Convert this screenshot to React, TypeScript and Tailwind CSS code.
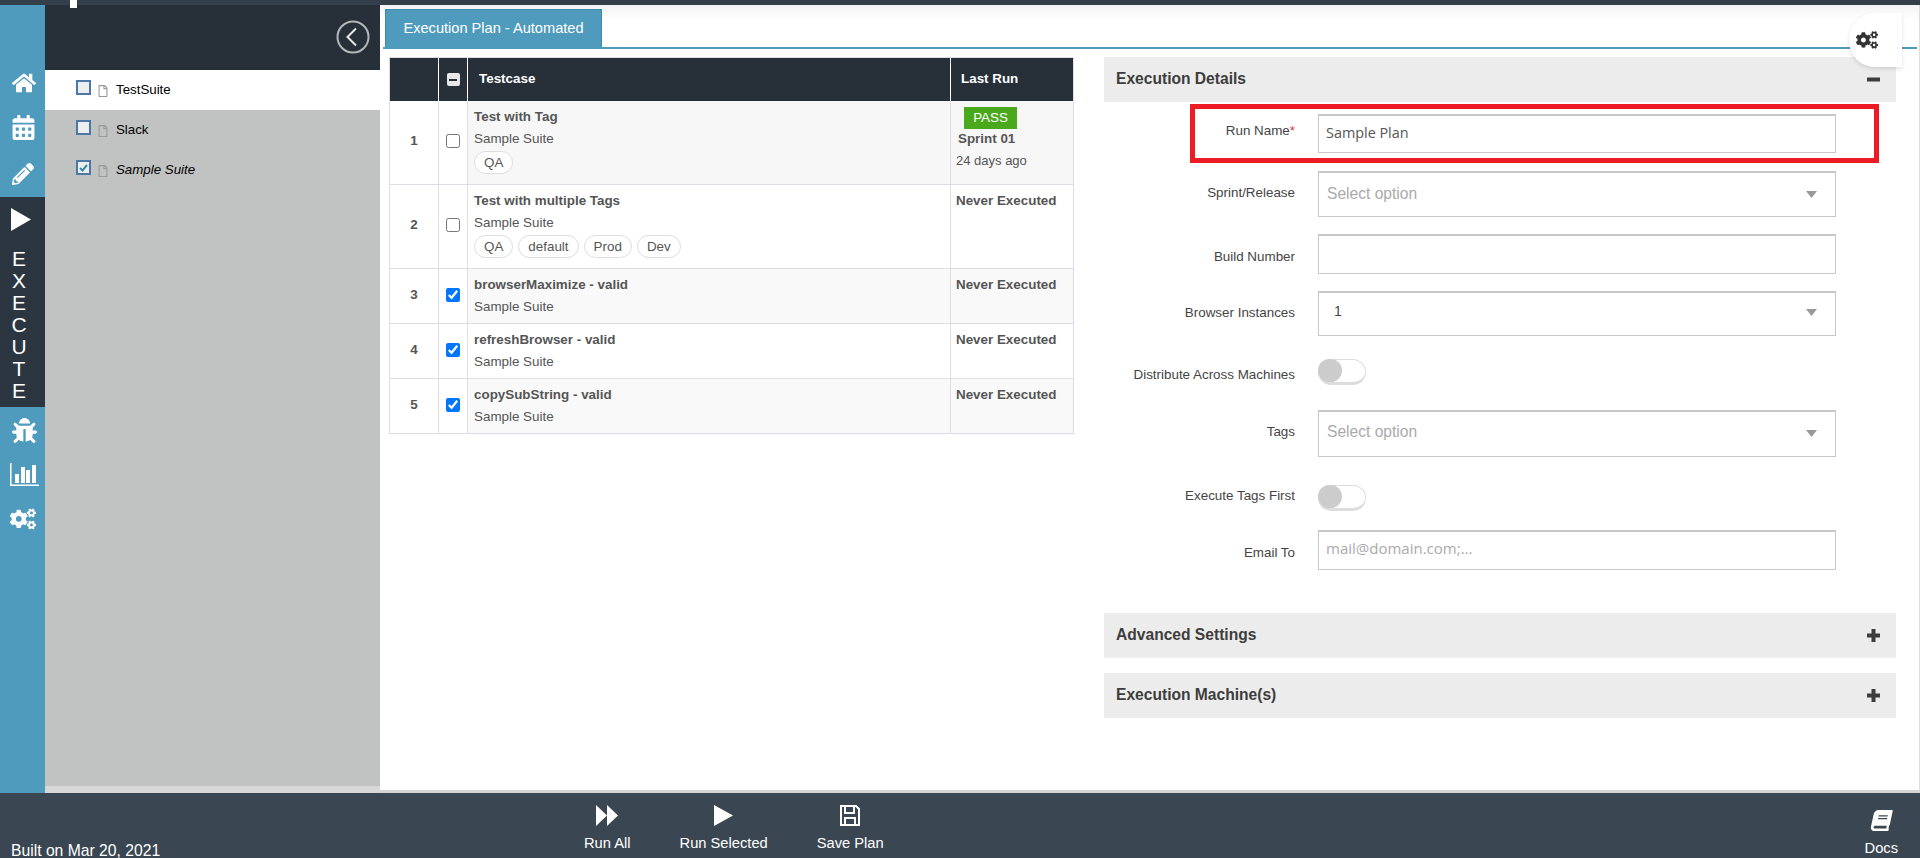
import { FaHome, FaCalendarAlt, FaPencilAlt, FaBug, FaCogs, FaBook, FaRegFile } from 'react-icons/fa';

const rows = [
  { n: 1, title: 'Test with Tag', tags: ['QA'], checked: false, bg: 'bg-[#f7f7f7]', h: 'h-[84px]', numTop: 'pt-[29px]', passed: true },
  { n: 2, title: 'Test with multiple Tags', tags: ['QA', 'default', 'Prod', 'Dev'], checked: false, bg: 'bg-white', h: 'h-[84px]', numTop: 'pt-[29px]', passed: false },
  { n: 3, title: 'browserMaximize - valid', tags: [], checked: true, bg: 'bg-[#f9f9f9]', h: 'h-[55px]', numTop: 'pt-[15px]', passed: false },
  { n: 4, title: 'refreshBrowser - valid', tags: [], checked: true, bg: 'bg-white', h: 'h-[55px]', numTop: 'pt-[15px]', passed: false },
  { n: 5, title: 'copySubString - valid', tags: [], checked: true, bg: 'bg-[#f9f9f9]', h: 'h-[54px]', numTop: 'pt-[15px]', passed: false },
];

const suites = [
  { name: 'TestSuite', checked: false, active: true },
  { name: 'Slack', checked: false, active: false },
  { name: 'Sample Suite', checked: true, active: false },
];

function Arrow() {
  return (
    <svg width="11" height="7" viewBox="0 0 11 7" className="ml-auto mr-[18px] mt-[2px] shrink-0">
      <polygon points="0,0 11,0 5.5,7" fill="#999999" />
    </svg>
  );
}

function Label({ text, offset, star }: { text: string; offset: string; star?: boolean }) {
  return (
    <div className={`shrink-0 text-right text-[13.4px] leading-[16px] text-[#444444] ${offset}`}>
      {text}
      {star && <span className="text-[#e0312f]">*</span>}
    </div>
  );
}

function Toggle() {
  return (
    <div className="ml-[23px] w-[48px] h-[26px] rounded-full border border-[#dddddd] border-b-[3px] bg-white">
      <div className="w-[24px] h-[23px] -mt-px -ml-px rounded-full bg-[#cccccc]" />
    </div>
  );
}

function Section({ title, open }: { title: string; open?: boolean }) {
  return (
    <div className="h-[45px] bg-[#ececec] flex items-center pl-[12px] pr-[16px] pb-[1px] text-[15.6px] font-bold text-[#3d3d3d]">
      {title}
      <svg width="13" height="13" viewBox="0 0 13 13" className="ml-auto" fill="#3d3d3d">
        <rect x="0" y="4.5" width="13" height="4" />
        {!open && <rect x="4.5" y="0" width="4" height="13" />}
      </svg>
    </div>
  );
}

function FooterButton({ label, icon }: { label: string; icon: React.ReactNode }) {
  return (
    <div className="flex flex-col items-center text-white text-[14.7px] leading-[16px] whitespace-nowrap">
      <div className="h-[22px] flex items-center mb-[9px]">{icon}</div>
      {label}
    </div>
  );
}

export default function App() {
  return (
    <div className="w-[1920px] h-[858px] flex flex-col overflow-hidden bg-white font-['Liberation_Sans',Arial,sans-serif]">
      <div className="relative h-[5px] shrink-0 bg-[#333f4a]">
        <div className="absolute left-[70px] top-0 w-[7px] h-[8px] bg-white z-10" />
      </div>

      <div className="flex h-[788px] shrink-0">
        {/* Icon rail */}
        <div className="w-[45px] shrink-0 bg-[#4f9bbd] text-white flex flex-col">
          <div className="h-[192px] flex flex-col items-center">
            <FaHome size={24} className="mt-[66px] ml-[2px]" />
            <FaCalendarAlt size={25} className="mt-[20px] ml-[1px]" />
            <FaPencilAlt size={22} className="mt-[23px] ml-[1px]" />
          </div>
          <div className="h-[210px] bg-[#2c3640] flex flex-col items-center">
            <svg width="20" height="23" viewBox="0 0 20 23" className="mt-[11px] mr-[3px]" fill="white">
              <polygon points="0,0 20,11.5 0,23" />
            </svg>
            <div className="mt-[17px] mr-[7px] flex flex-col items-center text-[21px] leading-[22px]">
              {'EXECUTE'.split('').map((c, i) => (
                <span key={i}>{c}</span>
              ))}
            </div>
          </div>
          <div className="flex flex-col items-center">
            <FaBug size={25} className="mt-[11px] ml-[3px]" />
            <svg width="29" height="23" viewBox="0 0 29 23" className="mt-[20px] ml-[3px]" fill="white">
              <rect x="0" y="0" width="1.5" height="23" />
              <rect x="0" y="21.5" width="29" height="1.5" />
              <rect x="5" y="11" width="4" height="9" />
              <rect x="11" y="4" width="4" height="16" />
              <rect x="16" y="7" width="4" height="13" />
              <rect x="22" y="2" width="4" height="18" />
            </svg>
            <FaCogs size={26} className="mt-[20px] ml-[1px]" />
          </div>
        </div>

        {/* Suite tree */}
        <div className="w-[335px] shrink-0 flex flex-col bg-[#c1c3c2]">
          <div className="h-[65px] shrink-0 bg-[#272f39] flex items-center justify-end pr-[10px]">
            <svg width="34" height="34" viewBox="0 0 34 34" fill="none" className="mb-[1px]">
              <circle cx="17" cy="17" r="15.5" stroke="#b5b8bb" strokeWidth="2" />
              <path d="M20 8.5 L11.5 17 L20 25.5" stroke="#e8e8e8" strokeWidth="2" />
            </svg>
          </div>
          {suites.map((s) => (
            <div
              key={s.name}
              className={`h-[40px] flex items-start pl-[31px] pt-[10px] text-[13.3px] leading-[18px] text-black ${s.active ? 'bg-white' : ''} ${s.checked ? 'italic' : ''}`}
            >
              <div className="w-[15px] h-[15px] border-2 border-[#4a78a8] bg-[#eeeeee] flex items-center justify-center">
                {s.checked && (
                  <svg width="9" height="8" viewBox="0 0 9 8" fill="none">
                    <path d="M1 4 L3.5 6.5 L8 1" stroke="#3a87ad" strokeWidth="2" />
                  </svg>
                )}
              </div>
              <FaRegFile size={12} className="ml-[6px] mt-[5px] text-[#999999]" />
              <span className="ml-[7px] mt-[1px]">{s.name}</span>
            </div>
          ))}
          <div className="mt-auto h-[7px] bg-[#d8d8d8]" />
        </div>

        {/* Main */}
        <div className="relative flex-1 min-w-0 flex flex-col border-r border-[#dddddd] border-b-[3px] border-b-[#d5d5d5] bg-gradient-to-b from-[#f4f4f4] to-white to-[2%]">
          <div className="ml-[5px] mt-[4px] w-[217px] h-[38px] bg-[#4f9bbd] border border-b-0 border-[#3f8aab] text-white text-[14.6px] flex items-center justify-center">
            Execution Plan - Automated
          </div>
          <div className="ml-[3px] mr-[2px] h-[2px] bg-[#4f9bbd]" />

          <div className="absolute right-[17px] top-[8px] w-[53px] h-[54px] bg-white rounded-l-[26px] shadow-[0_2px_4px_rgba(0,0,0,0.12)] flex items-center pl-[7px] text-[#333333] z-10">
            <FaCogs size={22} />
          </div>

          <div className="flex items-start mt-[8px]">
            {/* Testcase table */}
            <div className="ml-[9px] w-[685px] shrink-0 border-x border-b border-[#dddde6]">
              <div className="h-[44px] bg-[#272f39] text-white text-[13.4px] font-bold grid grid-cols-[49px_29px_483px_1fr] border-t border-[#dddde6]">
                <div className="border-r border-white" />
                <div className="border-r border-white flex items-center justify-center">
                  <div className="w-[13px] h-[13px] rounded-[2px] bg-[#e8e8e8] flex items-center justify-center">
                    <div className="w-[8px] h-[2px] bg-[#272f39]" />
                  </div>
                </div>
                <div className="border-r border-white flex items-center pl-[11px]">Testcase</div>
                <div className="flex items-center pl-[10px]">Last Run</div>
              </div>
              {rows.map((r) => (
                <div key={r.n} className={`${r.h} ${r.bg} grid grid-cols-[49px_29px_483px_1fr] border-b border-[#dddde6] last:border-b-0 text-[13.4px] leading-[22px] text-[#555555]`}>
                  <div className={`border-r border-[#dddde6] bg-white text-center font-bold ${r.numTop}`}>{r.n}</div>
                  <div className={`border-r border-[#dddde6] bg-white flex justify-center pr-[1px] ${r.numTop}`}>
                    <input type="checkbox" defaultChecked={r.checked} className="w-[14px] h-[14px] mt-[4px]" />
                  </div>
                  <div className="border-r border-[#dddde6] pl-[6px] pt-[5px]">
                    <div className="font-bold">{r.title}</div>
                    <div>Sample Suite</div>
                    {r.tags.length > 0 && (
                      <div className="flex gap-[5px] mt-[1px]">
                        {r.tags.map((t) => (
                          <span key={t} className="h-[23px] px-[9px] rounded-full border border-[#dddddd] bg-white leading-[21px]">
                            {t}
                          </span>
                        ))}
                      </div>
                    )}
                  </div>
                  {r.passed ? (
                    <div className="pl-[5px] pt-[6px]">
                      <div className="ml-[8px] w-[53px] h-[22px] bg-[#4aa81d] text-white text-center leading-[22px]">PASS</div>
                      <div className="font-bold ml-[2px] -mt-[1px]">Sprint 01</div>
                      <div className="text-[13px]">24 days ago</div>
                    </div>
                  ) : (
                    <div className="pl-[5px] pt-[5px] font-bold">Never Executed</div>
                  )}
                </div>
              ))}
            </div>

            {/* Execution details */}
            <div className="ml-[30px] w-[792px] shrink-0">
              <Section title="Execution Details" open />

              <div className="mt-[2px] ml-[86px] w-[689px] h-[59px] border-[5px] border-[#ed1c24] flex py-[5px]">
                <Label text="Run Name" star offset="pt-[9px] w-[100px]" />
                <div className="ml-[23px] w-[518px] h-[39px] border border-[#c8c8c8] border-t-2 flex items-center pl-[7px] pb-[3px] font-['Open_Sans',sans-serif] text-[14.4px] text-[#555555]">
                  Sample Plan
                </div>
              </div>

              <div className="mt-[8px] flex">
                <Label text="Sprint/Release" offset="pt-[14px] w-[191px]" />
                <div className="ml-[23px] w-[518px] h-[46px] border border-[#c8c8c8] border-t-2 flex items-center pl-[8px] pb-[2px] text-[15.6px] text-[#aaaaaa]">
                  Select option
                  <Arrow />
                </div>
              </div>

              <div className="mt-[17px] flex">
                <Label text="Build Number" offset="pt-[15px] w-[191px]" />
                <div className="ml-[23px] w-[518px] h-[40px] border border-[#c8c8c8] border-t-2" />
              </div>

              <div className="mt-[17px] flex">
                <Label text="Browser Instances" offset="pt-[14px] w-[191px]" />
                <div className="ml-[23px] w-[518px] h-[45px] border border-[#c8c8c8] border-t-2 flex items-center pl-[15px] pb-[5px] text-[14px] text-[#444444]">
                  1
                  <Arrow />
                </div>
              </div>

              <div className="mt-[23px] flex">
                <Label text="Distribute Across Machines" offset="pt-[8px] w-[191px]" />
                <Toggle />
              </div>

              <div className="mt-[25px] flex">
                <Label text="Tags" offset="pt-[14px] w-[191px]" />
                <div className="ml-[23px] w-[518px] h-[47px] border border-[#c8c8c8] border-t-2 flex items-center pl-[8px] pb-[4px] text-[15.6px] text-[#aaaaaa]">
                  Select option
                  <Arrow />
                </div>
              </div>

              <div className="mt-[28px] flex">
                <Label text="Execute Tags First" offset="pt-[3px] w-[191px]" />
                <Toggle />
              </div>

              <div className="mt-[19px] flex">
                <Label text="Email To" offset="pt-[15px] w-[191px]" />
                <div className="ml-[23px] w-[518px] h-[40px] border border-[#c8c8c8] border-t-2 flex items-center pl-[7px] pb-[4px] font-['Open_Sans',sans-serif] text-[15px] text-[#aaaaaa]">
                  mail@domain.com;...
                </div>
              </div>

              <div className="mt-[43px]">
                <Section title="Advanced Settings" />
              </div>
              <div className="mt-[15px]">
                <Section title="Execution Machine(s)" />
              </div>
            </div>
          </div>
        </div>
      </div>

      {/* Footer */}
      <div className="flex-1 bg-[#3a4753] flex text-white relative">
        <div className="mt-[50px] ml-[11px] text-[15.7px] leading-[16px] whitespace-nowrap">Built on Mar 20, 2021</div>
        <div className="absolute left-[584px] top-[11px] flex items-start gap-[49px]">
          <FooterButton
            label="Run All"
            icon={
              <svg width="22" height="21" viewBox="0 0 22 21" fill="white">
                <polygon points="0,0 11,10.5 0,21" />
                <polygon points="11,0 22,10.5 11,21" />
              </svg>
            }
          />
          <FooterButton
            label="Run Selected"
            icon={
              <svg width="19" height="21" viewBox="0 0 19 21" fill="white">
                <polygon points="0,0 19,10.5 0,21" />
              </svg>
            }
          />
          <FooterButton
            label="Save Plan"
            icon={
              <svg width="20" height="21" viewBox="0 0 20 21" fill="none" stroke="white" strokeWidth="2">
                <path d="M1 1 H16 L19 4 V20 H1 Z" />
                <path d="M5 1 V8 H14 V1" />
                <path d="M5 20 V13 H15 V20" />
              </svg>
            }
          />
        </div>
        <div className="ml-auto mr-[22px] mt-[16px]">
          <FooterButton label="Docs" icon={<FaBook size={21} className="-skew-x-12" />} />
        </div>
      </div>
    </div>
  );
}
